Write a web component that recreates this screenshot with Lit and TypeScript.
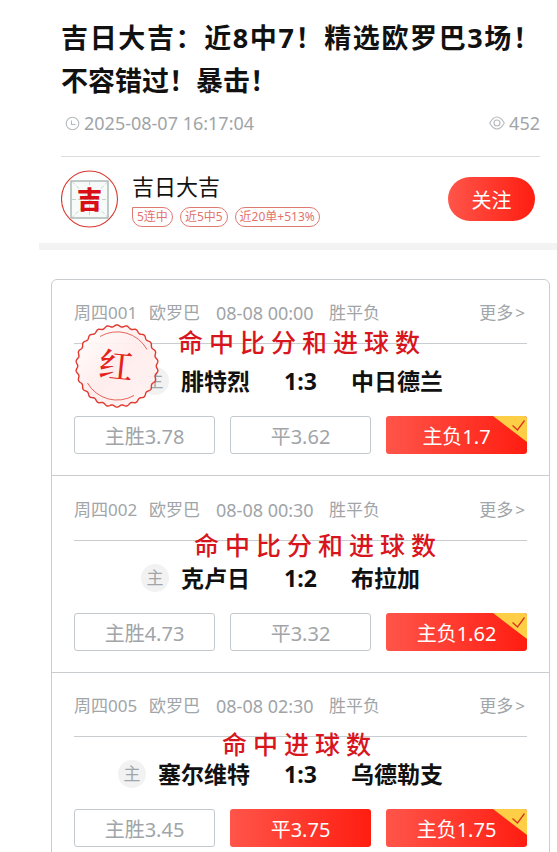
import { LitElement, html, css, svg, nothing } from "lit";
import { customElement, property } from "lit/decorators.js";
import { classMap } from "lit/directives/class-map.js";
import { styleMap } from "lit/directives/style-map.js";

interface Odd {
  label: string;
  picked?: boolean;
  hit?: boolean;
}

interface Match {
  no: string;
  league: string;
  time: string;
  play: string;
  home: string;
  away: string;
  score: string;
  note: string;
  noteX: number;
  noteY: number;
  seal?: boolean;
  odds: Odd[];
}

const MATCHES: Match[] = [
  {
    no: "周四001", league: "欧罗巴", time: "08-08 00:00", play: "胜平负",
    home: "腓特烈", away: "中日德兰", score: "1:3",
    note: "命中比分和进球数", noteX: 126, noteY: 45, seal: true,
    odds: [{ label: "主胜3.78" }, { label: "平3.62" }, { label: "主负1.7", picked: true, hit: true }],
  },
  {
    no: "周四002", league: "欧罗巴", time: "08-08 00:30", play: "胜平负",
    home: "克卢日", away: "布拉加", score: "1:2",
    note: "命中比分和进球数", noteX: 142, noteY: 52,
    odds: [{ label: "主胜4.73" }, { label: "平3.32" }, { label: "主负1.62", picked: true, hit: true }],
  },
  {
    no: "周四005", league: "欧罗巴", time: "08-08 02:30", play: "胜平负",
    home: "塞尔维特", away: "乌德勒支", score: "1:3",
    note: "命中进球数", noteX: 170, noteY: 54,
    odds: [{ label: "主胜3.45" }, { label: "平3.75", picked: true }, { label: "主负1.75", picked: true, hit: true }],
  },
];

const NOTE_SIZE = 25;
const NOTE_PITCH = 31;

/* Closed wavy outline of the round seal. */
function sealOutline(c: number, r: number, amp: number, waves: number): string {
  const steps = waves * 12;
  const pts: string[] = [];
  for (let i = 0; i < steps; i++) {
    const a = (i / steps) * Math.PI * 2;
    const d = r + amp * Math.cos(a * waves);
    pts.push(`${(c + d * Math.sin(a)).toFixed(2)} ${(c - d * Math.cos(a)).toFixed(2)}`);
  }
  return `M${pts.join("L")}Z`;
}

@customElement("hit-seal")
export class HitSeal extends LitElement {
  static styles = css`
    :host { display: block; width: 84px; height: 84px; }
    .seal { display: block; width: 100%; height: 100%; }
    .word { font: 500 34px KaiTi, STKaiti, "Noto Serif CJK SC", "Noto Sans CJK SC", serif; fill: #e32219; }
  `;
  render() {
    return html`<svg class="seal" viewBox="0 0 84 84" role="img" aria-label="红">
      ${svg`
        <defs>
          <linearGradient id="tint" x1="0" y1="0" x2="1" y2="1">
            <stop offset="0" stop-color="#fff" stop-opacity="0.96"/>
            <stop offset="0.5" stop-color="#ffecec" stop-opacity="0.94"/>
            <stop offset="1" stop-color="#fff3f3" stop-opacity="0.88"/>
          </linearGradient>
        </defs>
        <path d=${sealOutline(42, 40.2, 0.95, 26)} fill="url(#tint)" stroke="#e0392f" stroke-width="1.4"/>
        <path d="M25 12.500A34 34 0 0 1 72 25.500" fill="none" stroke="#e2554d" stroke-width="0.9"/>
        <path d="M12.500 59A34 34 0 0 0 59 71.500" fill="none" stroke="#e2554d" stroke-width="0.9"/>
        <text class="word" x="41" y="54" text-anchor="middle" transform="rotate(6 42 42)">红</text>
      `}
    </svg>`;
  }
}

@customElement("match-item")
export class MatchItem extends LitElement {
  @property({ attribute: false }) match!: Match;

  static styles = css`
    :host { display: block; position: relative; padding: 21px 22px; }
    .info {
      display: grid;
      grid-template-columns: 75px 67px 113px 1fr auto;
      padding-bottom: 18px;
      border-bottom: 1px solid #c9cdcf;
      font-size: 17px;
      line-height: 24px;
      color: #9fa5a8;
      white-space: nowrap;
    }
    .time { font-size: 18px; }
    .more {
      grid-column: 5;
      display: flex;
      gap: 2px;
      padding-right: 2px;
      color: inherit;
      text-decoration: none;
    }
    .teams {
      display: grid;
      grid-template-columns: 1fr 101px 1fr;
      align-items: center;
      padding: 23px 0 21px;
      font-size: 23px;
      line-height: 28px;
      font-weight: 700;
      color: #111;
      white-space: nowrap;
    }
    .home { display: flex; align-items: center; justify-content: flex-end; gap: 12px; }
    .host-mark {
      width: 28px;
      height: 28px;
      border-radius: 50%;
      background: #f2f2f2;
      color: #9fa5a8;
      font-size: 17px;
      font-weight: 400;
      text-align: center;
    }
    .score { text-align: center; }
    .odds { display: grid; grid-template-columns: repeat(3, 1fr); gap: 15px; }
    .odd {
      position: relative;
      height: 38px;
      padding: 3px 0 0;
      border: 1px solid #c3c9cc;
      border-radius: 3px;
      background: #fff;
      color: #9fa5a8;
      font-family: inherit;
      font-size: 20px;
      line-height: 32px;
      overflow: hidden;
    }
    .picked {
      border: 0;
      background: linear-gradient(90deg, #ff554a, #ff1d11);
      color: #fff;
    }
    .tick { position: absolute; top: 0; right: 0; width: 34px; height: 26px; }
    .note {
      position: absolute;
      margin: 0;
      font-family: KaiTi, STKaiti, "Noto Sans CJK SC", sans-serif;
      font-size: 25px;
      line-height: 32px;
      font-weight: 500;
      color: #d8151d;
      text-align-last: justify;
      white-space: nowrap;
    }
    .seal { position: absolute; left: 23px; top: 44px; }
  `;

  render() {
    const m = this.match;
    const width = (m.note.length - 1) * NOTE_PITCH + NOTE_SIZE;
    const place = { left: `${m.noteX}px`, top: `${m.noteY}px`, width: `${width}px` };
    return html`
      <div class="info">
        <span>${m.no}</span><span>${m.league}</span><span class="time">${m.time}</span><span>${m.play}</span>
        <a class="more" href="#more"><span>更多</span><span>&gt;</span></a>
      </div>
      <div class="teams">
        <div class="home"><span class="host-mark">主</span><span>${m.home}</span></div>
        <span class="score">${m.score}</span>
        <span>${m.away}</span>
      </div>
      <div class="odds">
        ${m.odds.map((o) => html`
          <button type="button" class=${classMap({ odd: true, picked: !!o.picked })}>
            ${o.label}${o.hit
              ? html`<svg class="tick" viewBox="0 0 34 26" aria-hidden="true">
                  <path d="M0 0H34V26Z" fill="#ffce47" />
                  <path d="M19.500 9.500L24.500 14L31.500 4.500" fill="none" stroke="#d8361c" stroke-width="1.3" />
                </svg>`
              : nothing}
          </button>`)}
      </div>
      <p class="note" style=${styleMap(place)}>${m.note}</p>
      ${m.seal ? html`<hit-seal class="seal"></hit-seal>` : nothing}
    `;
  }
}

@customElement("app-root")
export class AppRoot extends LitElement {
  static styles = css`
    :host {
      display: block;
      padding-left: 39px;
      background: #fff;
      color: #111;
      font-family: "Noto Sans", "Noto Sans CJK SC", sans-serif;
    }
    .head { padding: 16px 17px 0 22px; }
    .title { margin: 0; font-size: 27px; line-height: 43px; font-weight: 700; white-space: nowrap; }
    .line { display: block; }
    .full { text-align-last: justify; }
    .meta {
      display: flex;
      justify-content: space-between;
      padding: 9px 0 21px;
      border-bottom: 1px solid #dcdcdc;
      color: #9fa5a8;
      font-size: 18px;
      line-height: 24px;
    }
    .stat { display: flex; align-items: center; gap: 4px; }
    .clock { width: 15px; height: 15px; margin-left: 4px; }
    .eye { width: 16px; height: 14px; }
    .author { display: flex; align-items: center; padding: 13px 5px 15px 0; }
    .avatar { width: 58px; height: 58px; flex: none; }
    .glyph { font: 900 25px KaiTi, STKaiti, "Noto Sans CJK SC", sans-serif; fill: #d80f16; }
    .who { flex: 1; margin-left: 13px; }
    .name { font-size: 22px; line-height: 30px; }
    .tags { display: flex; gap: 7px; margin-top: 6px; }
    .tag {
      box-sizing: border-box;
      height: 20px;
      padding: 0 4px;
      border: 1px solid #df7a72;
      border-radius: 10px;
      color: #e2736b;
      font-size: 12px;
      line-height: 18px;
      white-space: nowrap;
    }
    .tag:first-child { border-top-left-radius: 0; }
    .follow {
      width: 87px;
      height: 44px;
      padding: 0;
      border: 0;
      border-radius: 22px;
      background: linear-gradient(90deg, #ff554a, #ff1d11);
      color: #fff;
      font-family: inherit;
      font-size: 20px;
    }
    .band { height: 7px; background: #f3f3f3; }
    .card { margin: 29px 7px 0 12px; border: 1px solid #c9cdcf; border-radius: 6px; }
    .item + .item { border-top: 1px solid #c9cdcf; padding-top: 22px; }
    .item:last-child { padding-top: 21px; }
  `;

  render() {
    return html`
      <header class="head">
        <h1 class="title">
          <span class="line full">吉日大吉：近8中7！精选欧罗巴3场！</span>
          <span class="line">不容错过！暴击！</span>
        </h1>
        <div class="meta">
          <span class="stat">
            <svg class="clock" viewBox="0 0 15 15" fill="none" stroke="#b4b9bb" aria-hidden="true">
              <circle cx="7.500" cy="7.500" r="6.300" stroke-width="1.100" />
              <path d="M6.500 4.500V8.500H10.500" stroke-width="1.100" />
            </svg>
            <time>2025-08-07 16:17:04</time>
          </span>
          <span class="stat">
            <svg class="eye" viewBox="0 0 16 14" fill="none" stroke="#b4b9bb" stroke-width="1.100" aria-hidden="true">
              <path d="M0.700 7C3 3 5.500 1 8 1S13 3 15.300 7C13 11 10.500 13 8 13S3 11 0.700 7Z" />
              <circle cx="8" cy="7" r="3" />
            </svg>
            452
          </span>
        </div>
        <div class="author">
          <svg class="avatar" viewBox="0 0 58 58" role="img" aria-label="吉">
            <circle cx="28.500" cy="29" r="28" fill="#fdfefe" stroke="#d8392f" stroke-width="1.100" />
            <rect x="10" y="11" width="37" height="37" fill="#f6faf9" stroke="#a3aeaa" stroke-width="1.300" />
            <path d="M11 11.500L47 47.500M47 11.500L11 47.500M28.500 11V48M11 29.500H47" fill="none" stroke="#c5cdca" stroke-width="0.900" stroke-dasharray="4 2" />
            <text class="glyph" x="28.500" y="39" text-anchor="middle">吉</text>
          </svg>
          <div class="who">
            <div class="name">吉日大吉</div>
            <div class="tags">
              <span class="tag">5连中</span><span class="tag">近5中5</span><span class="tag">近20单+513%</span>
            </div>
          </div>
          <button type="button" class="follow">关注</button>
        </div>
      </header>
      <div class="band"></div>
      <main class="card">
        ${MATCHES.map((m) => html`<match-item class="item" .match=${m}></match-item>`)}
      </main>
    `;
  }
}
